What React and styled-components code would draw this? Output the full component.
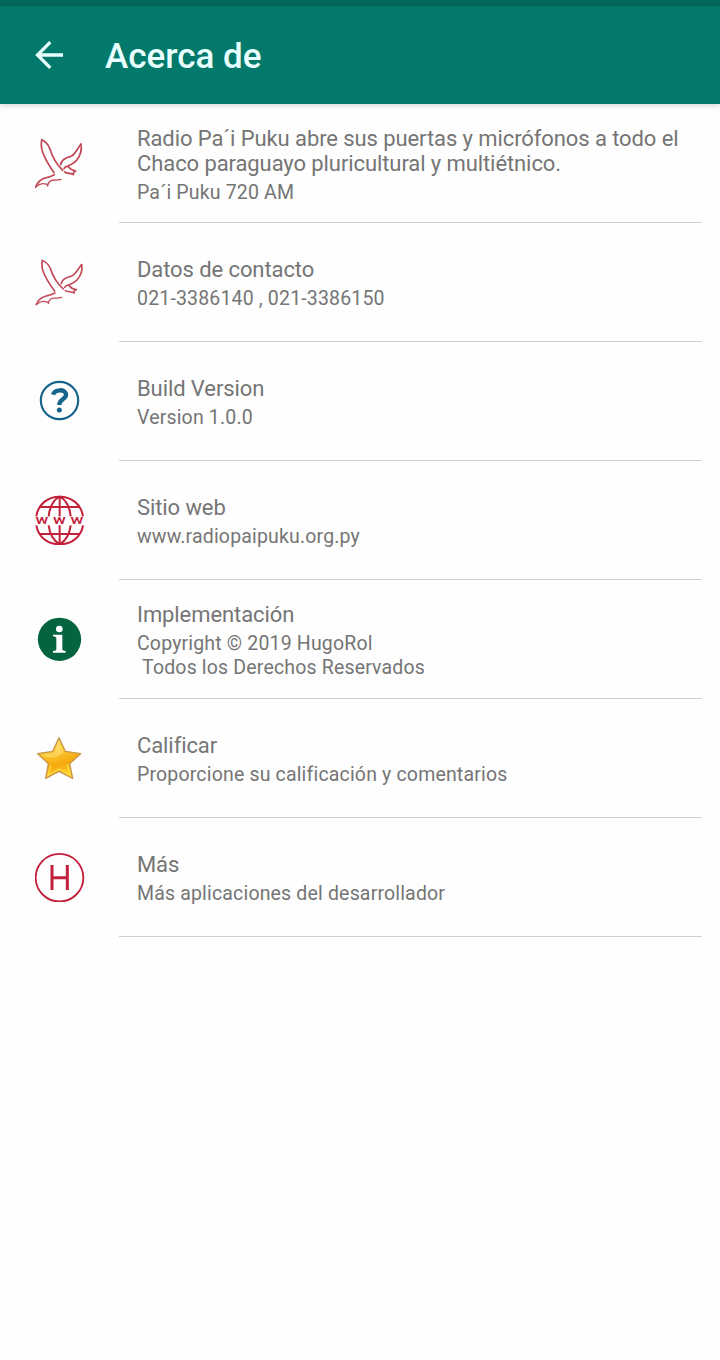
import styled, { createGlobalStyle } from 'styled-components';


const BirdIcon = ({ viewBox = '30 24 150 150' }) => (
    <Icon viewBox={viewBox} preserveAspectRatio="none" fill="none" stroke="#c24756" strokeLinecap="round" strokeLinejoin="round">
        <path strokeWidth="5" d="M50 30 C47 46 50 62 57 76 C65 95 76 112 87 128" />
        <path strokeWidth="5" d="M50 29 C61 34 69 42 74 55 C81 78 93 102 113 121" />
        <path strokeWidth="5" d="M107 104 C108 92 122 83 138 79 C152 73 157 55 168 42" />
        <path strokeWidth="5" d="M168 43 C171 58 166 77 154 92 C146 101 137 105 129 108" />
        <path strokeWidth="5" d="M117 116 C122 108 128 107 133 113 C137 120 144 121 152 123 L146 127 L145 134 C138 128 128 132 119 126" />
        <path strokeWidth="5" d="M32 171 C38 156 49 146 64 143 C74 141 80 138 88 134" />
        <path strokeWidth="4" d="M32 171 C40 165 46 159 55 161 L67 163 L68 168 C69 157 76 151 86 150 C94 151 101 150 108 148" />
    </Icon>
);

const LowBirdIcon = () => <BirdIcon viewBox="28 18 150 161" />;

const QuestionIcon = () => (
    <Icon viewBox="30 18 150 150" fill="none" stroke="#16648c">
        <circle cx="103.500" cy="91.500" r="56" strokeWidth="6.500" />
        <path strokeWidth="13" d="M84 74 C89 58 122 55 123 74 C124 88 103 86 103 105" />
        <circle cx="103" cy="120" r="7.500" fill="#16648c" stroke="none" />
    </Icon>
);

const WebIcon = () => (
    <Icon viewBox="30 21 150 150" fill="none" stroke="#c3203a" strokeWidth="6">
        <path d="M34 85 C39 50 67 26 104 26 C141 26 169 50 174 85" />
        <path d="M34 112 C39 145 67 169 104 169 C141 169 169 145 174 112" />
        <path d="M104 26 V85 M104 112 V169 M45 57 H163 M45 138 H163" />
        <path d="M71 85 C74 58 86 35 104 26 C122 35 134 58 137 85" />
        <path d="M71 112 C74 138 86 158 104 169 C122 158 134 138 137 112" />
        <WebText transform="scale(1.4 1)" x="36.500 74 111.500" y="109" textAnchor="middle">www</WebText>
    </Icon>
);

const InfoIcon = () => (
    <Icon viewBox="30 21 150 150" fill="#fff">
        <circle cx="103.500" cy="97" r="65" fill="#04643f" />
        <circle cx="103" cy="66" r="10" />
        <path d="M84 83 H112 V128 Q112 131 122 132 V137 H84 V132 Q94 131 94 128 V92 Q93 89 84 88 Z" />
    </Icon>
);

const StarIcon = () => (
    <Icon viewBox="30 18 150 150">
        <defs>
            <linearGradient id="gold" x1="0" y1="0" x2="0.300" y2="1">
                <stop offset="0" stopColor="#ffe27a" />
                <stop offset="0.450" stopColor="#fcc42d" />
                <stop offset="0.750" stopColor="#f6a80e" />
                <stop offset="1" stopColor="#ffd02d" />
            </linearGradient>
        </defs>
        <path
            d="M102 32 L121 73 L167 80 L134 110 L143 154 L102 133 L62 154 L70 110 L38 80 L83 73 Z"
            fill="url(#gold)" stroke="#c9954a" strokeWidth="4" strokeLinejoin="round"
        />
        <path d="M102 44 L87 78 L51 84 Q86 103 116 75 Z" fill="#ffed9c" opacity="0.400" />
        <path d="M102 126 L69 145 L77 116 M102 126 L135 145 L127 112" fill="none" stroke="#ffdb40" strokeWidth="4" />
    </Icon>
);

const LetterIcon = () => (
    <Icon viewBox="30 21 150 150" fill="none" stroke="#c3203c">
        <circle cx="103.500" cy="98" r="71.500" strokeWidth="5.500" />
        <path strokeWidth="9" d="M81 60 V135 M127 60 V135 M81 98 H127" />
    </Icon>
);

const items = [
    {
        icon: BirdIcon,
        title: 'Radio Pa´i Puku abre sus puertas y micrófonos a todo el Chaco paraguayo pluricultural y multiétnico.',
        text: 'Pa´i Puku 720 AM',
    },
    { icon: LowBirdIcon, title: 'Datos de contacto', text: '021-3386140 , 021-3386150' },
    { icon: QuestionIcon, title: 'Build Version', text: 'Version 1.0.0' },
    { icon: WebIcon, title: 'Sitio web', text: 'www.radiopaipuku.org.py' },
    { icon: InfoIcon, title: 'Implementación', text: 'Copyright © 2019 HugoRol\n Todos los Derechos Reservados' },
    { icon: StarIcon, title: 'Calificar', text: 'Proporcione su calificación y comentarios' },
    { icon: LetterIcon, title: 'Más', text: 'Más aplicaciones del desarrollador' },
];

function App() {
    return (
        <Screen>
            <GlobalStyle />
            <StatusBar />
            <Toolbar>
                <BackButton aria-label="Atrás">
                    <svg width="28" height="28" viewBox="0 0 28 28" fill="none" stroke="#e9ffff" strokeWidth="3.300">
                        <path d="M28 14 H2.500 M15.300 1.200 L2.500 14 L15.300 26.800" />
                    </svg>
                </BackButton>
                <Heading>Acerca de</Heading>
            </Toolbar>
            <List>
                {items.map(({ icon: ItemIcon, title, text }) => (
                    <Row key={title}>
                        <IconCell><ItemIcon /></IconCell>
                        <Content>
                            <Title>{title}</Title>
                            <Text>{text}</Text>
                        </Content>
                    </Row>
                ))}
            </List>
        </Screen>
    )
}

export default App;

const GlobalStyle = createGlobalStyle`
body {
    margin: 0;
    background: #fefefe;
    font-family: Roboto, "Liberation Sans", sans-serif;
}
`;

const Screen = styled.div`
min-height: 1360px;
background: #fefefe;
`;

const StatusBar = styled.div`
height: 6px;
background: #01695b;
`;

const Toolbar = styled.header`
display: flex;
align-items: center;
height: 98px;
background: #02796a;
box-shadow: 0 1px 6px rgba(0, 0, 0, 0.2);
`;

const BackButton = styled.button`
display: flex;
margin: 0 0 0 35px;
padding: 0;
border: 0;
background: none;
`;

const Heading = styled.h1`
margin: 4px 0 0 42px;
color: #e9ffff;
font-size: 35px;
font-weight: 500;
line-height: 42px;
`;

const List = styled.ul`
margin: 0;
padding: 0;
list-style: none;
`;

const Row = styled.li`
display: flex;
height: 119px;
`;

const IconCell = styled.div`
display: flex;
align-items: center;
width: 84px;
height: 118px;
padding-left: 35px;
`;

const Icon = styled.svg`
width: 50px;
height: 50px;
`;

const WebText = styled.text`
fill: #c3203a;
stroke: none;
font: 500 37px Roboto, sans-serif;
`;

const Content = styled.div`
display: flex;
flex-direction: column;
justify-content: center;
gap: 5px;
width: 565px;
border-bottom: 1px solid #cfcfcf;
padding: 4px 0 0 18px;
color: #757575;
`;

const Title = styled.div`
font-size: 22px;
line-height: 25px;
letter-spacing: -0.09px;
`;

const Text = styled.div`
font-size: 19.5px;
line-height: 24px;
letter-spacing: 0.17px;
white-space: pre-wrap;
`;
